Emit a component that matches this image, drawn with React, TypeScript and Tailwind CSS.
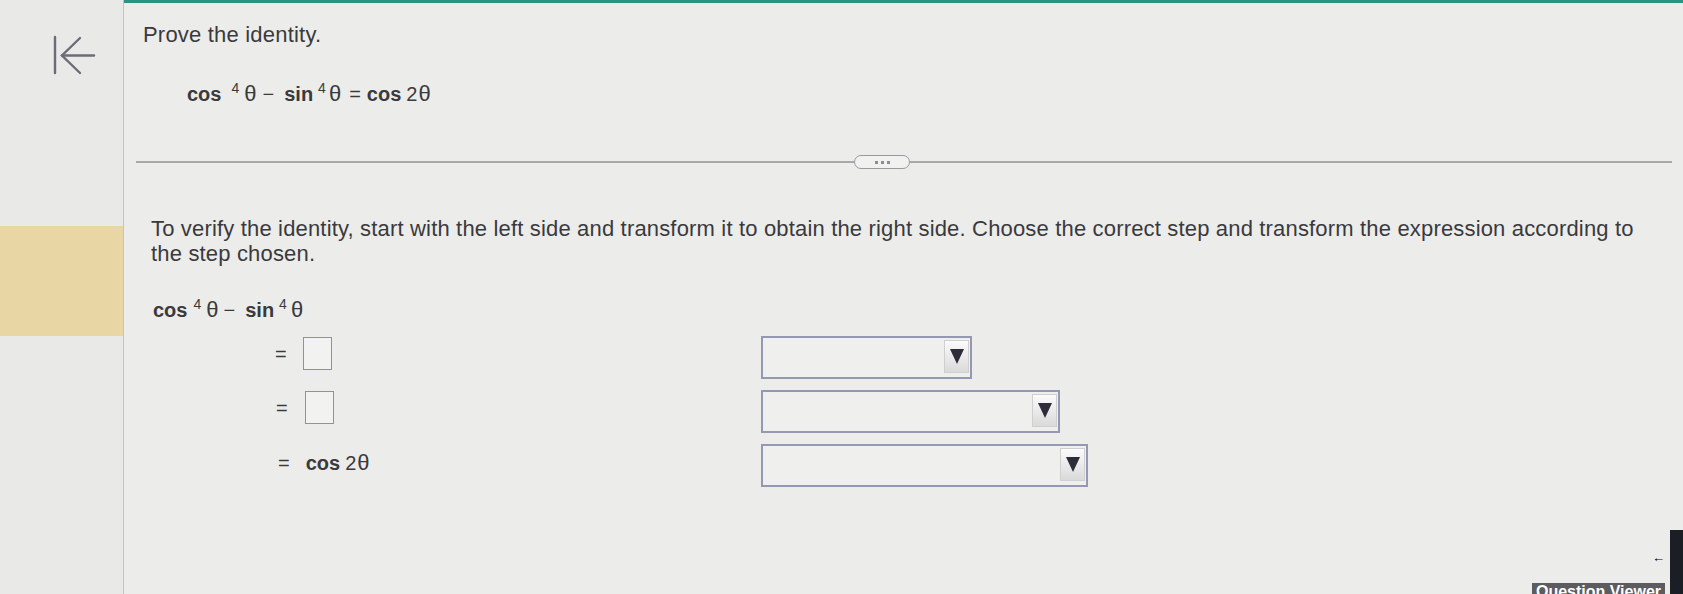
import React from 'react'

const font = { fontFamily: '"Liberation Sans", Arial, sans-serif' }

function Sup({ children, ml = 'ml-[6px]' }: { children: React.ReactNode; ml?: string }) {
  return <span className={`${ml} relative -top-[8px] text-[14px]`}>{children}</span>
}

function Theta({ ml = '' }: { ml?: string }) {
  return <span className={`${ml} text-[22px]`}>θ</span>
}

function Dropdown({ width }: { width: string }) {
  return (
    <div className={`${width} h-[43px] border-2 border-[#9598b2] bg-[#efefee] flex items-start justify-end pt-[2px] pr-[1px]`}>
      <div className="w-[25px] h-[33px] border border-[#cfcfcf] bg-gradient-to-b from-[#fbfbfb] to-[#dadada] flex items-center justify-center">
        <svg width="14" height="15" viewBox="0 0 14 15">
          <path d="M0 0 H14 L7 15 Z" fill="#2d2d3a" />
        </svg>
      </div>
    </div>
  )
}

function Blank() {
  return <div className="w-[29px] h-[33px] border-[1.5px] border-[#8c90aa] bg-[#f2f2f1]" />
}

export default function App() {
  return (
    <div className="relative h-[594px] w-full overflow-hidden bg-[#ececeb] text-[#3a3a3c] flex" style={font}>
      {/* sidebar */}
      <aside className="w-[124px] shrink-0 border-r border-[#c4c4c4] bg-[#e9e9e8] flex flex-col">
        <div className="pt-[35px] pl-[53px]">
          <svg width="44" height="41" viewBox="0 0 44 41" fill="none" stroke="#6c6c78" strokeWidth="2.4" strokeLinecap="round">
            <path d="M2 2 V38" />
            <path d="M27 3 L9 20.5 L27 38" />
            <path d="M9 20.5 H41" />
          </svg>
        </div>
        <div className="mt-[150px] h-[110px] bg-[#e8d7a4]" />
      </aside>

      {/* main */}
      <main className="flex-1 min-w-0 flex flex-col">
        <div className="h-[3px] bg-[#2b9585]" />

        <h1 className="pt-[20px] pl-[19px] text-[22px] leading-[24px] tracking-[0.2px]">Prove the identity.</h1>

        <div className="mt-[35px] pl-[63px] text-[20px] leading-[24px] whitespace-nowrap">
          <span className="font-bold">cos</span>
          <Sup ml="ml-[10px]">4</Sup>
          <Theta ml="ml-[5px]" />
          <span className="ml-[6px]">−</span>
          <span className="ml-[10px] font-bold">sin</span>
          <Sup ml="ml-[5px]">4</Sup>
          <Theta ml="ml-[3px]" />
          <span className="ml-[8px]">=</span>
          <span className="ml-[6px] font-bold">cos</span>
          <span className="ml-[5px]">2</span>
          <Theta ml="ml-[1px]" />
        </div>

        <div className="mt-[47px] pl-[12px] flex items-center">
          <div className="w-[718px] h-[2px] bg-[#a9a9aa]" />
          <div className="w-[56px] h-[14px] rounded-full border-[1.5px] border-[#9a9a9c] bg-[#f1f1f0] flex items-center justify-center gap-[3px]">
            <span className="w-[3px] h-[3px] bg-[#8e8e92]" />
            <span className="w-[3px] h-[3px] bg-[#8e8e92]" />
            <span className="w-[3px] h-[3px] bg-[#8e8e92]" />
          </div>
          <div className="flex-1 h-[2px] bg-[#a9a9aa] mr-[11px]" />
        </div>

        <p className="mt-[47px] pl-[27px] text-[22px] leading-[25px] tracking-[0.17px] whitespace-nowrap">
          To verify the identity, start with the left side and transform it to obtain the right side. Choose the correct step and transform the expression according to
          <br />
          the step chosen.
        </p>

        <div className="mt-[32px] pl-[29px] text-[20px] leading-[24px] whitespace-nowrap">
          <span className="font-bold">cos</span>
          <Sup ml="ml-[6px]">4</Sup>
          <Theta ml="ml-[5px]" />
          <span className="ml-[5px]">−</span>
          <span className="ml-[10px] font-bold">sin</span>
          <Sup ml="ml-[5px]">4</Sup>
          <Theta ml="ml-[4px]" />
        </div>

        <div className="mt-[12px] pl-[29px] flex flex-col gap-[11px]">
          <div className="flex items-start">
            <div className="w-[608px] pl-[122px] pt-[1px] flex items-center gap-[16px]">
              <span className="text-[20px]">=</span>
              <Blank />
            </div>
            <Dropdown width="w-[211px]" />
          </div>
          <div className="flex items-start">
            <div className="w-[608px] pl-[123px] pt-[1px] flex items-center gap-[17px]">
              <span className="text-[20px]">=</span>
              <Blank />
            </div>
            <Dropdown width="w-[299px]" />
          </div>
          <div className="flex items-center">
            <div className="w-[608px] pl-[125px] flex items-center gap-[16px] text-[20px] leading-[24px] -mt-[6px]">
              <span>=</span>
              <span className="whitespace-nowrap">
                <span className="font-bold">cos</span>
                <span className="ml-[5px]">2</span>
                <Theta ml="ml-[1px]" />
              </span>
            </div>
            <Dropdown width="w-[327px]" />
          </div>
        </div>
      </main>

      {/* right edge overlays */}
      <div className="absolute right-[18px] top-[548px] text-[13px] text-black">←</div>
      <div className="absolute right-0 top-[530px] bottom-0 w-[13px] bg-[#1c1e26]" />
      <div className="absolute left-[1532px] top-[583px] w-[133px] h-[11px] overflow-hidden bg-[#5b5b60]">
        <div className="pt-[1px] text-center text-[16px] leading-none font-bold text-white whitespace-nowrap">Question Viewer</div>
      </div>
    </div>
  )
}
